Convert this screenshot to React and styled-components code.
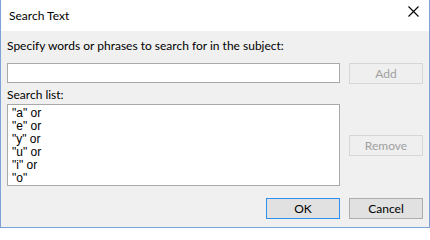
import React from 'react'
import styled, { createGlobalStyle } from 'styled-components'

const GlobalStyle = createGlobalStyle`
  html, body {
    margin: 0;
    padding: 0;
    background: #ffffff;
  }
  * {
    box-sizing: border-box;
  }
`

const items = ['"a" or', '"e" or', '"y" or', '"u" or', '"i" or', '"o"']

const App = () => {
  return (
    <>
      <GlobalStyle />
      <Window>
        <TitleBar>
          <Title>Search Text</Title>
          <CloseButton aria-label="Close">
            <svg width="11" height="11" viewBox="0 0 11 11">
              <path d="M0.5 0.5 L10.5 10.5 M10.5 0.5 L0.5 10.5" stroke="#000" strokeWidth="1.1" />
            </svg>
          </CloseButton>
        </TitleBar>
        <Body>
          <Label>Specify words or phrases to search for in the subject:</Label>
          <Row $top={9}>
            <TextInput type="text" />
            <Button disabled>Add</Button>
          </Row>
          <Label $top={3}>Search list:</Label>
          <Row $top={1}>
            <ListBox>
              {items.map((it) => (
                <ListItem key={it}>{it}</ListItem>
              ))}
            </ListBox>
            <SideColumn>
              <Button disabled>Remove</Button>
            </SideColumn>
          </Row>
          <Footer>
            <Button $primary>OK</Button>
            <Button>Cancel</Button>
          </Footer>
        </Body>
      </Window>
    </>
  )
}

export default App

const uiFont = `"Segoe UI", Lato, "Noto Sans", sans-serif`

const Window = styled.div`
  width: 430px;
  height: 228px;
  display: flex;
  flex-direction: column;
  border-left: 1px solid #7fa2d6;
  border-right: 1px solid #7fa2d6;
  border-bottom: 1px solid #7fa2d6;
  background: #f0f0f0;
  font-family: ${uiFont};
  font-size: 12px;
  color: #000;
`

const TitleBar = styled.div`
  height: 31px;
  flex: none;
  display: flex;
  align-items: center;
  justify-content: space-between;
  background: #fff;
  padding-left: 8px;
`

const Title = styled.div`
  font-size: 12px;
  margin-top: -1px;
`

const CloseButton = styled.div`
  width: 30px;
  height: 31px;
  display: flex;
  align-items: center;
  justify-content: center;
  padding-bottom: 9px;
  padding-right: 2px;
  margin-top: 1px;
`

const Body = styled.div`
  flex: 1;
  display: flex;
  flex-direction: column;
  padding: 7px 6px 0 6px;
`

const Label = styled.div`
  line-height: 16px;
  height: 16px;
  margin-top: ${(p) => p.$top || 0}px;
`

const Row = styled.div`
  display: flex;
  align-items: flex-start;
  gap: 9px;
  margin-top: ${(p) => p.$top || 0}px;
`

const TextInput = styled.input`
  width: 333px;
  height: 20px;
  margin: 0;
  border: 1px solid #a9a9a9;
  background: #fff;
  outline: none;
`

const Button = styled.button`
  width: 74px;
  height: 21px;
  margin: 0;
  padding: 0;
  font-family: ${uiFont};
  font-size: 12px;
  color: #000;
  background: #e1e1e1;
  border: 1px solid ${(p) => (p.$primary ? '#2f8ff0' : '#adadad')};

  &:disabled {
    color: #a0a0a0;
    background: #efefef;
    border-color: #d6d6d6;
  }
`

const ListBox = styled.div`
  width: 333px;
  height: 82px;
  border: 1px solid #a9a9a9;
  background: #fff;
  padding: 2px 4px;
  font-family: "Liberation Sans", Arial, sans-serif;
  font-size: 12px;
`

const ListItem = styled.div`
  line-height: 13px;
  height: 13px;
`

const SideColumn = styled.div`
  padding-top: 31px;
`

const Footer = styled.div`
  display: flex;
  justify-content: flex-end;
  gap: 9px;
  margin-top: 12px;
`
